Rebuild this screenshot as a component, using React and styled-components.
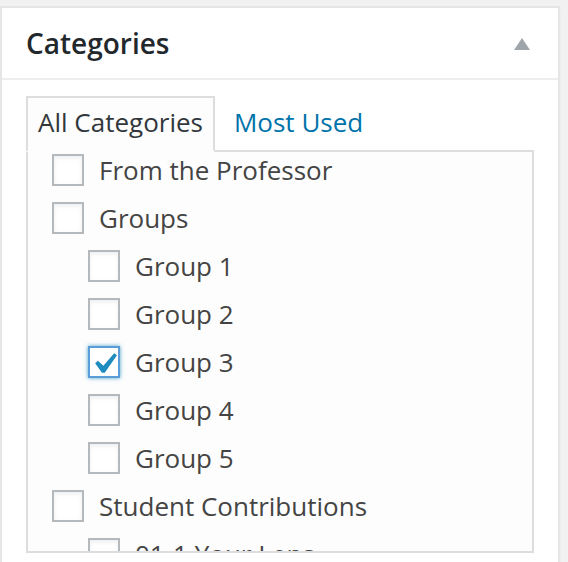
import React from 'react';
import styled, { createGlobalStyle } from 'styled-components';

const GlobalStyle = createGlobalStyle`
  html, body {
    margin: 0;
    padding: 0;
    background: #f1f1f1;
    overflow: hidden;
  }
  body {
    font-family: "Open Sans", "Liberation Sans", sans-serif;
    color: #444;
  }
`;

const Page = styled.div`
  padding: 6px 8px 0 0;
`;

const Postbox = styled.div`
  background: #fff;
  border: 2px solid #e5e5e5;
  box-shadow: 0 2px 2px rgba(0, 0, 0, 0.04);
`;

const Header = styled.div`
  height: 70px;
  display: flex;
  align-items: center;
  justify-content: space-between;
  padding: 0 28px 0 24px;
  border-bottom: 2px solid #eee;
`;

const Title = styled.h2`
  margin: 0;
  font-size: 28px;
  font-weight: 600;
  color: #23282d;
`;

const Toggle = styled.span`
  width: 0;
  height: 0;
  margin-top: 2px;
  border-left: 8px solid transparent;
  border-right: 8px solid transparent;
  border-bottom: 12px solid #a0a5aa;
`;

const Inside = styled.div`
  padding: 16px 24px 24px;
`;

const Tabs = styled.ul`
  display: flex;
  margin: 0 0 -2px;
  padding: 0;
  list-style: none;
`;

const Tab = styled.li`
  position: relative;
  z-index: 1;
  padding: 6px 10px 10px;
  margin-left: ${p => (p.$first ? '0' : '7px')};
  border: 2px solid ${p => (p.$active ? '#ddd' : 'transparent')};
  border-bottom-color: ${p => (p.$active ? '#fdfdfd' : 'transparent')};
  background: ${p => (p.$active ? '#fdfdfd' : 'transparent')};
  font-size: 26px;
  line-height: 36px;
  color: ${p => (p.$active ? '#32373c' : '#0073aa')};
`;

const Panel = styled.div`
  height: 399px;
  overflow: hidden;
  padding: 0 24px;
  border: 2px solid #ddd;
  background: #fdfdfd;
`;

const List = styled.ul`
  margin: 0;
  padding: 2px 0 0;
  list-style: none;
`;

const Children = styled.ul`
  margin: 0 0 0 36px;
  padding: 0;
  list-style: none;
`;

const Row = styled.label`
  display: flex;
  align-items: center;
  gap: 15px;
  height: 32px;
  margin-bottom: 16px;
  font-size: 26px;
  line-height: 32px;
  color: #444;
  white-space: nowrap;
`;

const Box = styled.span`
  position: relative;
  flex: none;
  box-sizing: border-box;
  width: 32px;
  height: 32px;
  background: #fff;
  border: 2px solid ${p => (p.$checked ? '#5b9dd9' : '#b4b9be')};
  box-shadow: ${p => (p.$checked
    ? '0 0 4px rgba(30, 140, 190, 0.8)'
    : 'inset 0 2px 4px rgba(0, 0, 0, 0.07)')};
`;

const Check = styled.svg`
  position: absolute;
  left: -7px;
  top: -5px;
  width: 42px;
  height: 42px;
  fill: #1e8cbe;
`;

const categories = [
  { name: 'From the Professor' },
  {
    name: 'Groups',
    children: [
      { name: 'Group 1' },
      { name: 'Group 2' },
      { name: 'Group 3', checked: true },
      { name: 'Group 4' },
      { name: 'Group 5' },
    ],
  },
  {
    name: 'Student Contributions',
    children: [
      { name: '01-1 Your Lens' },
      { name: '01-2 Your Story' },
    ],
  },
];

const Checkbox = ({ checked }) => (
  <Box $checked={checked}>
    {checked && (
      <Check viewBox="0 0 20 20">
        <path d="M14.83 4.89l1.34.94-5.81 8.38H9.02L5.78 9.67l1.34-1.25 2.57 2.4z" />
      </Check>
    )}
  </Box>
);

const Item = ({ cat }) => (
  <li>
    <Row>
      <Checkbox checked={cat.checked} />
      {cat.name}
    </Row>
    {cat.children && (
      <Children>
        {cat.children.map(c => <Item key={c.name} cat={c} />)}
      </Children>
    )}
  </li>
);

const App = () => (
  <Page>
    <GlobalStyle />
    <Postbox>
      <Header>
        <Title>Categories</Title>
        <Toggle />
      </Header>
      <Inside>
        <Tabs>
          <Tab $active $first>All Categories</Tab>
          <Tab>Most Used</Tab>
        </Tabs>
        <Panel>
          <List>
            {categories.map(c => <Item key={c.name} cat={c} />)}
          </List>
        </Panel>
      </Inside>
    </Postbox>
  </Page>
);

export default App;
